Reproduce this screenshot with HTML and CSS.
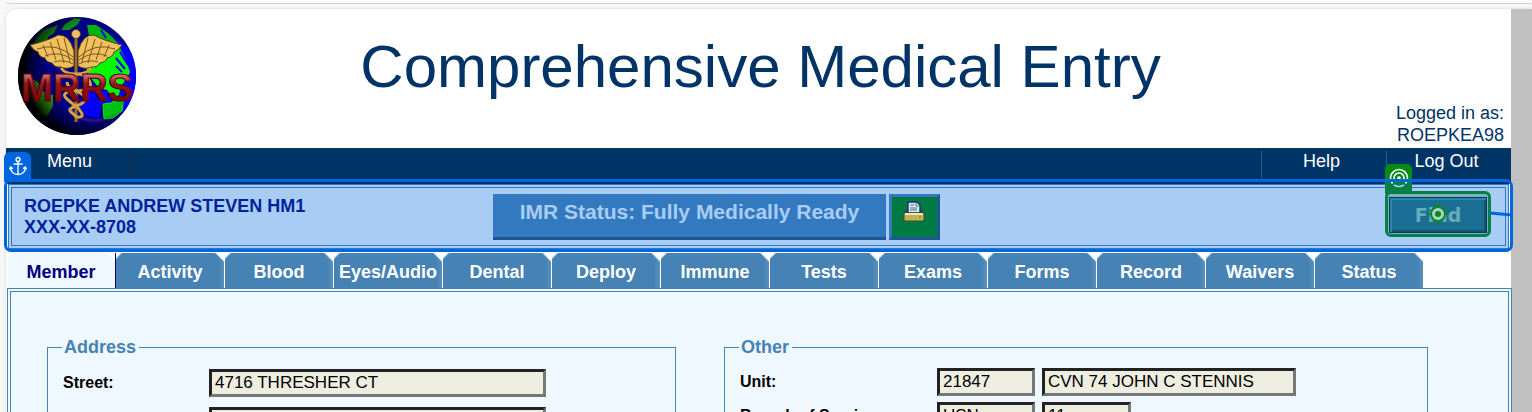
FILE: index.html
```html
<!DOCTYPE html>
<html lang="en">
<head>
<meta charset="utf-8">
<title>Comprehensive Medical Entry</title>
<link rel="stylesheet" href="styles.css">
</head>
<body>
<div class="toolbar-edge"></div>
<div class="viewport">
  <div class="page">
    <header class="header">
      <svg class="logo" viewBox="0 0 120 120" role="img" aria-label="MRRS">
        <defs>
          <clipPath id="globe"><circle cx="60" cy="60" r="59"/></clipPath>
          <radialGradient id="shade" gradientUnits="userSpaceOnUse" cx="78" cy="52" r="80">
            <stop offset="0.6" stop-color="#000" stop-opacity="0"/>
            <stop offset="0.78" stop-color="#000" stop-opacity="0.5"/>
            <stop offset="0.9" stop-color="#000"/>
          </radialGradient>
          <linearGradient id="red" x1="0" y1="0" x2="0" y2="1">
            <stop offset="0.15" stop-color="#e08080"/>
            <stop offset="0.4" stop-color="#94161c"/>
            <stop offset="1" stop-color="#6d0008"/>
          </linearGradient>
        </defs>
        <g clip-path="url(#globe)">
          <rect width="120" height="120" fill="#000084"/>
          <path d="M100 22l20 20v45l-14 14-4-16zM72 66l14 8 14 6-2 8-14 0-2 14-12-2-8-10z" fill="#0000f8"/>
          <path d="M52 92q12 16 34 12" fill="none" stroke="#3010b0" stroke-width="3"/>
          <path d="M48 8l10-6 6 1-4 6-8 5-8 0zM17 26l8-11 16-6-4 8-6 4-2 9-10 4-6-2z" fill="#108c18"/>
          <path d="M70 9l9 0 12 8 10 10 7 15 3 12-6-2-4-6-5-3-4-10-10-9-10-4z" fill="#00b410"/>
          <path d="M68 50l10-4 12-10 10-4 8 10 5 14-4 8-5 6-2 9-6 3-6-8-8-2-9-11z" fill="#00fa00"/>
          <path d="M86 88l8-1 10-7 3 3-2 12-9 7-9 1z" fill="#00c010" stroke="#10e820"/>
          <path d="M13 62l8 4 6 10 9 3 0 11-5 9-7 3-6-12-6-10z" fill="#30a010"/>
          <path d="M99 42l9 11M103 36l8 13M99 50l6 6M110 79l-3 10M84 14l5 8" stroke="#0000f8" stroke-width="2"/>
          <rect width="120" height="120" fill="url(#shade)"/>
        </g>
        <path d="M59 22v84" stroke="#9c7020" stroke-width="3"/>
        <g fill="#f0c060" stroke="#593c10" stroke-width="1">
          <path d="M57 35Q52 18 41 19 33 24 13 29q4 6 8 7 1 5 7 6 1 4 7 5 3 5 9 4 6 3 13-1z"/>
          <path d="M61 35Q66 18 77 19 85 24 105 29q-4 6-8 7-1 5-7 6-1 4-7 5-3 5-9 4-6 3-13-1z"/>
          <circle cx="59" cy="18" r="4.500"/>
        </g>
        <path d="M20 33q20-7 36 8M28 40q14-6 28 4M37 46q10-3 19 2M98 33q-20-7-36 8M90 40q-14-6-28 4M81 46q-10-3-19 2M26 29l5 12M33 26l6 18M40 23l7 24M47 22l6 24M92 29l-5 12M85 26l-6 18M78 23l-7 24M71 22l-6 24" fill="none" stroke="#7a5618" stroke-width="1"/>
        <path d="M44 52q4 6 15 6t14 8-14 9-9 8 9 7 5 6-5 5M74 52q-4 6-15 6M50 66q0 5 9 9t9 8-9 7-5 6 5 5" fill="none" stroke="#d8a040" stroke-width="3"/>
        <text class="logo-text" x="60" y="85" text-anchor="middle">MRRS</text>
      </svg>
      <h1 class="title">Comprehensive Medical Entry</h1>
      <p class="login">Logged in as:<br>ROEPKEA98</p>
    </header>

    <nav class="nav">
      <a class="nav-menu" href="#menu">Menu</a>
      <a class="nav-item" href="#help">Help</a>
      <a class="nav-item" href="#logout">Log Out</a>
    </nav>

    <section class="status">
      <div class="person">ROEPKE ANDREW STEVEN HM1<br>XXX-XX-8708</div>
      <div class="readiness">
        <button class="imr" type="button">IMR Status: Fully Medically Ready</button>
        <button class="print" type="button" aria-label="Print">
          <svg width="22" height="22" viewBox="0 0 22 22">
            <path d="M5 1h9l3 3v8H5z" fill="#dceaf8" stroke="#17365f" stroke-width="1.4"/>
            <path d="M13 1v4h4M7 4h4M7 7h7M7 9h7" fill="none" stroke="#496f9e"/>
            <path d="M4 8v4h14V8l3 4H1z" fill="#223f69"/>
            <rect x="1" y="12" width="20" height="8" rx="1" fill="#bdb455" stroke="#4b482d"/>
            <path d="M2 13h18" stroke="#f2e6a8" stroke-width="2"/>
            <circle cx="17" cy="16" r="1" fill="#6a9820"/>
          </svg>
        </button>
      </div>
      <div class="find-box">
        <button class="find" type="button">Find</button>
        <svg class="find-target" width="22" height="22" viewBox="0 0 22 22">
          <circle cx="11" cy="11" r="7" fill="#a9d0d8" stroke="#078a16" stroke-width="2"/>
          <circle cx="11" cy="11" r="3" fill="#078a16"/>
          <path d="M11 1v4M11 17v4M1 11h4M17 11h4" stroke="#078a16" stroke-width="2"/>
        </svg>
        <span class="find-badge">
          <svg width="20" height="20" viewBox="0 0 20 20" fill="none" stroke="#fff" stroke-width="1.600">
            <path d="M3.500 15.500a8.500 8.500 0 1 1 13 0M6.500 13.500a5 5 0 1 1 7 0"/>
            <circle cx="10" cy="10" r="1.800" fill="#fff" stroke="none"/>
            <path d="M5 17q5 3 10 0" stroke="#a9ccf5"/>
          </svg>
        </span>
      </div>
      <span class="outline"></span>
      <span class="anchor-badge">
        <svg width="18" height="20" viewBox="0 0 18 20" fill="none" stroke="#fff" stroke-width="1.300">
          <circle cx="9" cy="3.500" r="2"/>
          <path d="M9 5.500v13M4.500 8h9M1.500 11.500c.5 4.500 3 7 7.500 7s7-2.500 7.500-7M.5 13.500l1-2.500 2.500 1.500M17.500 13.500l-1-2.500-2.500 1.500"/>
        </svg>
      </span>
      <svg class="connector" width="22" height="6" viewBox="0 0 22 6">
        <path d="M0 2l22 2" stroke="#0066e0" stroke-width="3"/>
      </svg>
    </section>

    <nav class="tabs">
      <a class="tab tab-active" href="#member">Member</a>
      <a class="tab" href="#activity">Activity</a>
      <a class="tab" href="#blood">Blood</a>
      <a class="tab" href="#eyes">Eyes/Audio</a>
      <a class="tab" href="#dental">Dental</a>
      <a class="tab" href="#deploy">Deploy</a>
      <a class="tab" href="#immune">Immune</a>
      <a class="tab" href="#tests">Tests</a>
      <a class="tab" href="#exams">Exams</a>
      <a class="tab" href="#forms">Forms</a>
      <a class="tab" href="#record">Record</a>
      <a class="tab" href="#waivers">Waivers</a>
      <a class="tab" href="#status">Status</a>
    </nav>

    <main class="content">
      <fieldset class="group">
        <legend>Address</legend>
        <div class="rows">
          <label for="street">Street:</label>
          <input class="field" id="street" value="4716 THRESHER CT">
          <span></span>
          <input class="field" id="street2" aria-label="Street line 2">
        </div>
      </fieldset>
      <fieldset class="group">
        <legend>Other</legend>
        <div class="rows rows-other">
          <label for="unit">Unit:</label>
          <div class="pair">
            <input class="field code" id="unit" value="21847">
            <input class="field unit-name" aria-label="Unit name" value="CVN 74 JOHN C STENNIS">
          </div>
          <label for="branch">Branch of Service:</label>
          <div class="pair">
            <input class="field code" id="branch" value="USN">
            <input class="field component" aria-label="Component" value="11">
          </div>
        </div>
      </fieldset>
    </main>
  </div>
</div>
</body>
</html>
```
FILE: styles.css
```css
* { box-sizing: border-box; }

body {
  margin: 0;
  height: 100vh;
  overflow: hidden;
  display: flex;
  flex-direction: column;
  background: #f7f7f7;
  font-family: "Liberation Sans", Arial, sans-serif;
  font-size: 18px;
  color: #003366;
}

a { color: inherit; text-decoration: none; }

.toolbar-edge {
  flex: none;
  height: 3px;
  margin: 0 0 6px 6px;
  border-bottom-left-radius: 8px;
  background: #fafafa;
  box-shadow: 0 1px 1px #d0d0d0;
}

.viewport {
  flex: 1;
  margin-left: 6px;
  padding-right: 21px;
  border-top-left-radius: 10px;
  background: linear-gradient(to left, #c0c0c0 21px, #fff 21px);
  box-shadow: 0 0 3px #ccc;
}

.header {
  display: grid;
  grid-template-columns: 130px 1fr 130px;
  height: 139px;
  padding: 7px 7px 0 11px;
}

.logo { width: 120px; height: 120px; }

.logo-text {
  font: bold 38px "Liberation Sans", Arial, sans-serif;
  fill: url(#red);
  stroke: #5b0008;
  stroke-width: 1px;
}

.title {
  margin: 15px 0 0;
  font-size: 60px;
  line-height: 72px;
  font-weight: normal;
  text-align: center;
  white-space: nowrap;
}

.login {
  align-self: end;
  margin: 0 0 2px;
  line-height: 22px;
  text-align: right;
}

.nav {
  display: flex;
  height: 36px;
  padding: 3px 0 6px;
  background: #003366;
  color: #fff;
  line-height: 20px;
}

.nav-menu {
  width: 125px;
  margin-right: auto;
  padding-left: 41px;
  border-right: 1px solid #202c40;
}

.nav-item {
  width: 125px;
  padding-right: 5px;
  border-left: 1px solid #2a5a92;
  text-align: center;
}

.status {
  position: relative;
  display: grid;
  grid-template-columns: 469fr auto 550fr;
  height: 65px;
  margin: 0 2px;
  padding: 6px 15px 0 12px;
  border: 4px double #3279bf;
  background: #a9ccf5;
}

.person {
  padding-top: 2px;
  line-height: 21px;
  font-weight: bold;
  color: #001f9c;
}

.readiness { display: flex; gap: 3px; }

.imr {
  width: 393px;
  height: 46px;
  padding: 0 0 8px;
  border: 0 solid #1c5793;
  border-bottom-width: 3px;
  background: #3279bf;
  font: bold 21px "Liberation Sans", Arial, sans-serif;
  color: #a9ccf5;
}

.print {
  width: 51px;
  height: 46px;
  padding: 0 2px 11px 0;
  border: 3px solid;
  border-color: #3279bf #1c5793 #1c5793 #3279bf;
  background: #007a42;
}

.find-box {
  position: relative;
  justify-self: end;
  width: 106px;
  height: 46px;
  margin: -3px -1px 0 0;
  padding: 3px 0 0 1px;
  border: 3px solid #078048;
  border-radius: 6px;
  background: #80b0c0;
}

.find {
  width: 98px;
  height: 36px;
  padding: 0;
  border: 1px solid #003f58;
  background: #1b6f94;
  box-shadow: inset 2px 2px #2f86ab, inset -2px -2px #12536f;
  font: bold 19px "DejaVu Sans", sans-serif;
  color: #66acbb;
}

.find-target { position: absolute; top: 9px; left: 39px; }

.find-badge {
  position: absolute;
  top: -30px;
  left: -3px;
  width: 27px;
  height: 30px;
  padding: 4px;
  border-radius: 5px 5px 0 0;
  background: linear-gradient(#078a16 16px, #078048 16px);
}

.find-badge svg, .anchor-badge svg, .print svg { display: block; margin: auto; }

.outline {
  position: absolute;
  inset: -9px -8px -7px -8px;
  border: 3px solid #0066e0;
  border-radius: 7px;
}

.anchor-badge {
  position: absolute;
  top: -36px;
  left: -8px;
  width: 27px;
  height: 30px;
  padding-top: 4px;
  border-radius: 6px 6px 0 0;
  background: #0066e0;
}

.connector {
  position: absolute;
  top: 23px;
  right: -7px;
}

.tabs {
  display: flex;
  margin: 3px 0 0 1px;
  padding-top: 1px;
}

.tab {
  width: 109px;
  height: 35px;
  border-right: 1px solid #fff;
  background:
    linear-gradient(225deg, #fff 5px, transparent 7px),
    linear-gradient(135deg, #fff 3px, transparent 5px),
    linear-gradient(to left, #5a90bd, #4682b4 6px);
  color: #fff;
  font-weight: bold;
  line-height: 38px;
  text-align: center;
}

.tab-active {
  border-right-color: #000080;
  background:
    linear-gradient(225deg, #fff 5px, transparent 7px),
    linear-gradient(135deg, #fff 3px, transparent 5px),
    #f0f8ff;
  color: #000080;
}

.content {
  display: grid;
  grid-template-columns: 629px 704px;
  column-gap: 48px;
  margin: 0 -1px 0 1px;
  padding: 44px 36px 0;
  border: 4px double #4682b4;
  background: #f0f8ff;
}

.group {
  min-width: 0;
  margin: 0;
  padding: 0 14px;
  border: 1px solid #4682b4;
}

.group legend {
  padding: 0 3px 0 2px;
  color: #4682b4;
  font-weight: bold;
  line-height: 22px;
}

.rows {
  display: grid;
  grid-template-columns: 147px 1fr;
  row-gap: 10px;
  padding-top: 11px;
  color: #000;
  font-size: 16px;
  font-weight: bold;
  line-height: 28px;
}

.rows-other { grid-template-columns: 198px 1fr; row-gap: 6px; padding-top: 10px; }

.rows label { padding-left: 1px; }

.pair { display: flex; gap: 7px; }

.field {
  width: 337px;
  height: 28px;
  padding: 0 3px;
  border: 3px solid;
  border-color: #222 #777 #777 #222;
  background: #eeeee0;
  font: 17px "Liberation Sans", Arial, sans-serif;
  color: #000;
}

.code { width: 98px; }
.unit-name { width: 254px; }
.component { width: 89px; }
```
